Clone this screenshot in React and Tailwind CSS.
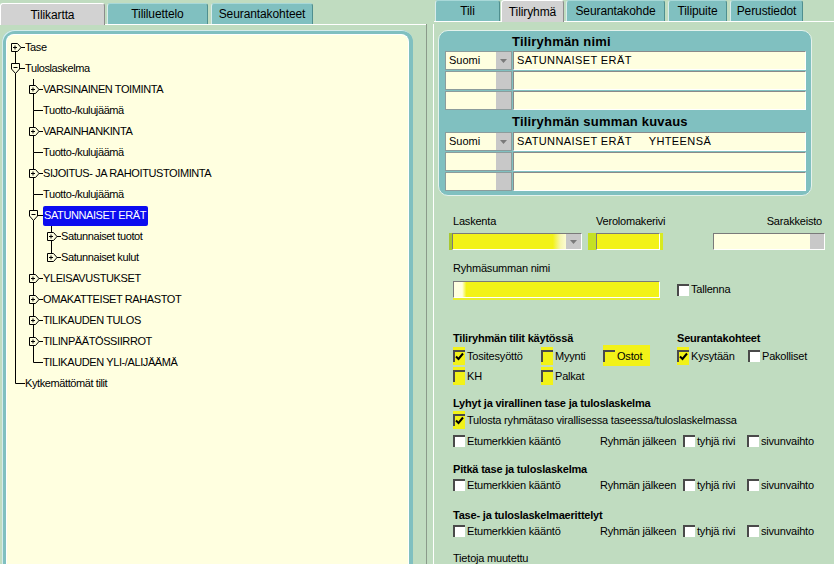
import React from 'react';

// flat tree rows: guides = ancestor lines, line = own vertical connector
const treeRows = [
  { label: 'Tase', guides: [], line: 'down', kind: 'plus' },
  { label: 'Tuloslaskelma', guides: [], line: 'full', kind: 'minus' },
  { label: 'VARSINAINEN TOIMINTA', guides: [true], line: 'full', kind: 'plus' },
  { label: 'Tuotto-/kulujäämä', guides: [true], line: 'full', kind: 'leaf' },
  { label: 'VARAINHANKINTA', guides: [true], line: 'full', kind: 'plus' },
  { label: 'Tuotto-/kulujäämä', guides: [true], line: 'full', kind: 'leaf' },
  { label: 'SIJOITUS- JA RAHOITUSTOIMINTA', guides: [true], line: 'full', kind: 'plus' },
  { label: 'Tuotto-/kulujäämä', guides: [true], line: 'full', kind: 'leaf' },
  { label: 'SATUNNAISET ERÄT', guides: [true], line: 'full', kind: 'minus', selected: true },
  { label: 'Satunnaiset tuotot', guides: [true, true], line: 'full', kind: 'plus' },
  { label: 'Satunnaiset kulut', guides: [true, true], line: 'up', kind: 'plus' },
  { label: 'YLEISAVUSTUKSET', guides: [true], line: 'full', kind: 'plus' },
  { label: 'OMAKATTEISET RAHASTOT', guides: [true], line: 'full', kind: 'plus' },
  { label: 'TILIKAUDEN TULOS', guides: [true], line: 'full', kind: 'plus' },
  { label: 'TILINPÄÄTÖSSIIRROT', guides: [true], line: 'full', kind: 'plus' },
  { label: 'TILIKAUDEN YLI-/ALIJÄÄMÄ', guides: [true], line: 'up', kind: 'leaf' },
  { label: 'Kytkemättömät tilit', guides: [], line: 'up', kind: 'leaf' },
];

function Guide({ on }) {
  return (
    <svg width="18" height="21" className="shrink-0">
      {on && <line x1="8.5" y1="0" x2="8.5" y2="21" stroke="#000" />}
    </svg>
  );
}

function NodeCell({ line, kind }) {
  return (
    <svg width="18" height="21" className="shrink-0">
      {line !== 'down' && <line x1="8.5" y1="0" x2="8.5" y2="10.5" stroke="#000" />}
      {line !== 'up' && <line x1="8.5" y1="10.5" x2="8.5" y2="21" stroke="#000" />}
      {kind === 'leaf' && <line x1="8.5" y1="10.5" x2="18" y2="10.5" stroke="#000" />}
      {kind === 'plus' && (
        <g stroke="#000" fill="#ffffe0">
          <line x1="13" y1="10.5" x2="18" y2="10.5" />
          <path d="M4.5 6.5 H10.5 L14 10.5 L10.5 14.5 H4.5 Z" />
          <path d="M6 10.5 H10 M8 8.5 V12.5" fill="none" />
        </g>
      )}
      {kind === 'minus' && (
        <g stroke="#000" fill="#ffffe0">
          <line x1="12.5" y1="10.5" x2="18" y2="10.5" />
          <path d="M4.5 5.5 H12.5 V11 L8.5 15.5 L4.5 11 Z" />
          <path d="M6.5 9.5 H10.5" fill="none" />
        </g>
      )}
    </svg>
  );
}

function Tree() {
  return (
    <div className="pt-[2px] text-[11px] tracking-[-0.4px]">
      {treeRows.map((r, i) => (
        <div key={i} className="flex h-[21px] items-center">
          {r.guides.map((g, j) => (
            <Guide key={j} on={g} />
          ))}
          <NodeCell line={r.line} kind={r.kind} />
          {r.selected ? (
            <span className="flex h-[20px] items-center rounded-[2px] bg-[#0c0cf0] pl-[1px] pr-[2px] text-white">{r.label}</span>
          ) : (
            <span className="whitespace-nowrap">{r.label}</span>
          )}
        </div>
      ))}
    </div>
  );
}

function Tab({ label, active, className }) {
  return (
    <div
      className={`${className} flex shrink-0 items-center justify-center rounded-t-[3px] border-l border-r border-t text-[12px] tracking-[-0.1px] ${
        active
          ? 'relative z-10 -mb-px h-[22px] border-l-white border-r-[#8c8c8c] border-t-white bg-[#d2d2d2]'
          : 'h-[21px] border-l-[#d8ecec] border-r-[#4f8f8f] border-t-[#a8d8d8] bg-[#80c0c0]'
      }`}
    >
      {label}
    </div>
  );
}

function Arrow() {
  return (
    <svg width="7" height="4">
      <path d="M0 0 H7 L3.5 4 Z" fill="#7a7a7a" />
    </svg>
  );
}

function Check({ checked, hl }) {
  return (
    <span
      className={`inline-flex h-[12px] w-[12px] shrink-0 items-center justify-center border-l-2 border-t-2 border-l-[#4a4a4a] border-t-[#4a4a4a] ${
        hl ? 'bg-[#f2f218] shadow-[0_-3px_0_0_#f2f218,0_3px_0_0_#f2f218]' : 'bg-white'
      }`}
    >
      {checked && (
        <svg width="9" height="9" className="-ml-[1px] -mt-[1px]">
          <path d="M1 4.5 L3.5 7 L8 1.5" stroke="#000" strokeWidth="2" fill="none" />
        </svg>
      )}
    </span>
  );
}

function CheckItem({ label, checked, hl, className = '' }) {
  return (
    <div className={`flex items-center ${className}`}>
      <Check checked={checked} hl={hl} />
      <span className="ml-[2px] whitespace-nowrap">{label}</span>
    </div>
  );
}

function PanelRow({ lang, text }) {
  return (
    <div className="mb-[1px] flex h-[19px] gap-[1px] pl-[6px]">
      <div className="flex w-[67px] border border-[#8c9c9c] bg-[#ffffe0]">
        <span className="flex-1 pl-[3px] text-[11px] leading-[17px]">{lang}</span>
        <span className="flex w-[15px] items-center justify-center bg-[#c8c8c8]">{lang && <Arrow />}</span>
      </div>
      <div className="w-[293px] border border-b-white border-l-[#8a8a8a] border-r-white border-t-[#8a8a8a] bg-[#ffffe0] pl-[3px] text-[11px] leading-[17px] tracking-[0.4px] whitespace-pre">
        {text}
      </div>
    </div>
  );
}

function OutputRow() {
  return (
    <div className="flex h-[20px] items-center">
      <CheckItem label="Etumerkkien kääntö" className="w-[147px]" />
      <span className="w-[83px] whitespace-nowrap">Ryhmän jälkeen</span>
      <CheckItem label="tyhjä rivi" className="w-[64px]" />
      <CheckItem label="sivunvaihto" />
    </div>
  );
}

const sunken = 'border border-b-white border-l-[#7a7a7a] border-r-white border-t-[#7a7a7a]';

export default function App() {
  return (
    <div className="flex h-[564px] w-[834px] overflow-hidden bg-[#c0dcc0] font-['Liberation_Sans',Arial,sans-serif] text-black">
      {/* left: account tree */}
      <div className="flex w-[426px] shrink-0 flex-col">
        <div className="flex h-[25px] items-end border-b border-white">
          <Tab active label="Tilikartta" className="w-[105px]" />
          <Tab label="Tililuettelo" className="ml-[2px] w-[101px]" />
          <Tab label="Seurantakohteet" className="ml-[3px] w-[102px]" />
        </div>
        <div className="ml-[2px] mt-[5px] w-[411px] flex-1 rounded-t-[12px] bg-[#80c0c0] px-[4px] pt-[4px] shadow-[inset_1px_1px_0_#d4ecec]">
          <div className="h-full rounded-t-[8px] border border-b-0 border-white bg-[#ffffe0]">
            <Tree />
          </div>
        </div>
      </div>

      {/* splitter */}
      <div className="mt-[24px] w-[8px] shrink-0 border-l border-r border-l-[#8a9a8a] border-r-white" />

      {/* right: group details */}
      <div className="flex w-[400px] flex-col text-[11px]">
        <div className="flex h-[25px] items-end border-b border-white pl-[1px]">
          <Tab label="Tili" className="w-[65px]" />
          <Tab active label="Tiliryhmä" className="ml-[1px] w-[63px]" />
          <Tab label="Seurantakohde" className="ml-[2px] w-[99px]" />
          <Tab label="Tilipuite" className="ml-[3px] w-[59px]" />
          <Tab label="Perustiedot" className="ml-[3px] w-[73px]" />
        </div>

        <div className="ml-[4px] mt-[8px] w-[374px] rounded-[10px] border border-[#e4f2ec] bg-[#80c0c0] pb-[3px] pt-[1px]">
          <div className="flex h-[19px] items-center pl-[73px] text-[13px] font-bold tracking-[0.2px]">Tiliryhmän nimi</div>
          <PanelRow lang="Suomi" text="SATUNNAISET ERÄT" />
          <PanelRow />
          <PanelRow />
          <div className="flex h-[21px] items-center pl-[73px] text-[13px] font-bold tracking-[0.2px]">Tiliryhmän summan kuvaus</div>
          <PanelRow lang="Suomi" text="SATUNNAISET ERÄT     YHTEENSÄ" />
          <PanelRow />
          <PanelRow />
        </div>

        <div className="pl-[19px] tracking-[-0.2px]">
          <div className="mt-[18px] flex h-[14px] items-center">
            <span className="w-[143px]">Laskenta</span>
            <span className="whitespace-nowrap">Verolomakerivi</span>
            <span className="ml-auto mr-[12px]">Sarakkeisto</span>
          </div>
          <div className="mt-[5px] flex h-[17px]">
            <div className={`-ml-px flex w-[130px] ${sunken} bg-[linear-gradient(90deg,#f2f218_78%,#f6f6b0_84%,#ffffe0_90%)] shadow-[-3px_0_0_0_#a8c830]`}>
              <span className="flex-1" />
              <span className="flex w-[15px] items-center justify-center bg-[#c8c8c8]"><Arrow /></span>
            </div>
            <div className={`ml-[14px] w-[64px] ${sunken} bg-[#f2f218] shadow-[-8px_0_0_0_#c4e024,3px_0_0_0_#d8ea20]`} />
            <div className={`ml-auto mr-[9px] flex w-[112px] ${sunken} bg-[#ffffe0]`}>
              <span className="flex-1" />
              <span className="w-[14px] bg-[#c8c8c8]" />
            </div>
          </div>

          <div className="mt-[11px] flex h-[14px] items-center">Ryhmäsumman nimi</div>
          <div className="mt-[6px] flex h-[17px] items-center">
            <div className={`h-[17px] w-[207px] ${sunken} bg-[linear-gradient(90deg,#ffffe0_4%,#f2f218_6%)] shadow-[0_2px_0_0_#e8ee30]`} />
            <CheckItem label="Tallenna" className="ml-[17px]" />
          </div>

          <div className="mt-[33px] flex h-[14px] items-center font-bold">
            <span className="w-[224px]">Tiliryhmän tilit käytössä</span>
            <span>Seurantakohteet</span>
          </div>
          <div className="mt-[1px] flex h-[20px] items-center">
            <CheckItem label="Tositesyöttö" checked hl className="w-[88px]" />
            <CheckItem label="Myynti" hl className="w-[62px]" />
            <div className="w-[74px]">
              <div className="flex w-fit items-center bg-[#f2f218] py-[2px] pr-[8px] shadow-[0_-1px_0_0_#f2f218]">
                <Check hl />
                <span className="ml-[2px]">Ostot</span>
              </div>
            </div>
            <CheckItem label="Kysytään" checked hl className="w-[71px]" />
            <CheckItem label="Pakolliset" />
          </div>
          <div className="flex h-[20px] items-center">
            <CheckItem label="KH" hl className="w-[88px]" />
            <CheckItem label="Palkat" hl />
          </div>

          <div className="mt-[10px] flex h-[14px] items-center font-bold">Lyhyt ja virallinen tase ja tuloslaskelma</div>
          <div className="flex h-[20px] items-center">
            <CheckItem label="Tulosta ryhmätaso virallisessa taseessa/tuloslaskelmassa" checked hl />
          </div>
          <div className="mt-[1px]">
            <OutputRow />
          </div>

          <div className="mt-[11px] flex h-[14px] items-center font-bold">Pitkä tase ja tuloslaskelma</div>
          <div className="mt-[-1px]">
            <OutputRow />
          </div>

          <div className="mt-[13px] flex h-[14px] items-center font-bold">Tase- ja tuloslaskelmaerittelyt</div>
          <div className="mt-[-1px]">
            <OutputRow />
          </div>

          <div className="mt-[10px] flex h-[14px] items-center">Tietoja muutettu</div>
        </div>
      </div>
    </div>
  );
}
